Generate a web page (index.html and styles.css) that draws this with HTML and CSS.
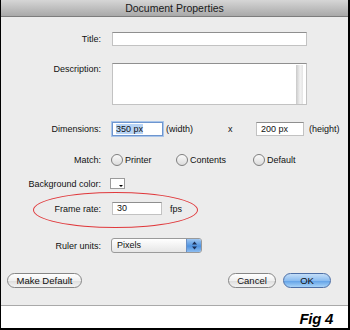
FILE: index.html
```html
<!DOCTYPE html>
<html lang="en">
<head>
    <meta charset="UTF-8">
    <title>Document Properties</title>
    <link rel="stylesheet" href="styles.css">
</head>
<body>
    <div class="figure">
        <div class="titlebar">Document Properties</div>
        <div class="dialog">
            <div class="row r-title">
                <label class="lbl">Title:</label>
                <div class="field wide"></div>
            </div>
            <div class="row r-desc">
                <label class="lbl">Description:</label>
                <div class="field area"><div class="scroll"></div></div>
            </div>
            <div class="row r-dims">
                <label class="lbl">Dimensions:</label>
                <div class="field dim focus"><span class="sel">350 px</span></div>
                <span class="unit">(width)</span>
                <span class="times">x</span>
                <div class="field dim2">200 px</div>
                <span class="unit2">(height)</span>
            </div>
            <div class="row r-match">
                <label class="lbl">Match:</label>
                <div class="opt o1"><span class="radio"></span>Printer</div>
                <div class="opt o2"><span class="radio"></span>Contents</div>
                <div class="opt"><span class="radio"></span>Default</div>
            </div>
            <div class="row r-bg">
                <label class="lbl">Background color:</label>
                <div class="swatch"><span class="tri"></span></div>
            </div>
            <div class="row r-frame">
                <label class="lbl">Frame rate:</label>
                <div class="field fps">30</div>
                <span class="fps-unit">fps</span>
            </div>
            <div class="row r-ruler">
                <label class="lbl">Ruler units:</label>
                <div class="popup">
                    <span class="popup-text">Pixels</span>
                    <span class="stepper">
                        <svg width="7" height="11" viewBox="0 0 7 11"><path d="M3.5 1.5 L6 4.5 H1 Z M3.5 9.5 L6 6.5 H1 Z" fill="#1b2f57"/></svg>
                    </span>
                </div>
            </div>
            <div class="buttons">
                <button class="btn make">Make Default</button>
                <div class="right">
                    <button class="btn cancel">Cancel</button>
                    <button class="btn ok">OK</button>
                </div>
            </div>
            <div class="ring"></div>
        </div>
        <div class="caption">Fig 4</div>
    </div>
</body>
</html>
```

FILE: styles.css
```css
html, body {
    margin: 0;
    padding: 0;
    background-color: #fff;
}
.figure {
    width: 350px;
    height: 330px;
    box-sizing: border-box;
    border-left: 1px solid #000;
    border-right: 2px solid #000;
    border-bottom: 2px solid #000;
    font-family: 'Liberation Sans', Arial, sans-serif;
    color: #111;
    font-size: 9px;
}
.titlebar {
    height: 16px;
    line-height: 16px;
    border-bottom: 1px solid #7d7d7d;
    background: linear-gradient(#d6d6d6, #a9a9a9);
    text-align: center;
    font-size: 10.5px;
    color: #1a1a1a;
}
.dialog {
    position: relative;
    background-color: #ececec;
    padding: 15px 0 17px 0;
    border-bottom: 1px solid #a9a9a9;
}
.row {
    display: flex;
    align-items: center;
}
.lbl {
    width: 100px;
    text-align: right;
    margin-right: 11px;
    flex-shrink: 0;
}
.r-desc { margin-top: 17px; align-items: flex-start; }
.r-desc .lbl { padding-top: 1px; }
.r-dims { margin-top: 17px; }
.r-match { margin-top: 18px; }
.r-bg { margin-top: 12px; }
.r-frame { margin-top: 13px; }
.r-ruler { margin-top: 23px; }

.field {
    box-sizing: border-box;
    height: 14px;
    background-color: #fff;
    border: 1px solid #c2c2c2;
    border-top-color: #8f8f8f;
    padding-left: 4px;
    line-height: 12px;
}
.wide { width: 195px; }
.area {
    width: 195px;
    height: 42px;
    position: relative;
}
.scroll {
    position: absolute;
    right: 3px;
    top: 1px;
    bottom: 0;
    width: 7px;
    background: linear-gradient(to right, #c9c9c9, #f2f2f2 60%, #e4e4e4);
}
.dim { width: 51px; }
.focus {
    border: 1px solid #6d95cf;
    box-shadow: 0 0 0 1px #a9c5ea;
    padding-left: 3px;
}
.sel { background-color: #b7d3f5; }
.unit { width: 62px; margin-left: 3px; }
.times { width: 28px; }
.dim2 { width: 48px; }
.unit2 { margin-left: 5px; }

.opt {
    display: flex;
    align-items: center;
}
.o1 { width: 65px; }
.o2 { width: 77px; }
.radio {
    box-sizing: border-box;
    width: 12px;
    height: 12px;
    border-radius: 50%;
    border: 1px solid #7f7f7f;
    background: linear-gradient(#fafafa, #dcdcdc);
    margin-right: 2px;
    margin-left: -1px;
}

.swatch {
    position: relative;
    box-sizing: border-box;
    width: 15px;
    height: 11px;
    margin-left: -2px;
    background-color: #fff;
    border: 1px solid #9b9b9b;
}
.tri {
    position: absolute;
    right: 1px;
    bottom: 1px;
    border-left: 2px solid transparent;
    border-right: 2px solid transparent;
    border-top: 2px solid #000;
}

.fps { width: 50px; height: 13px; line-height: 11px; }
.fps-unit { margin-left: 8px; }

.popup {
    box-sizing: border-box;
    width: 91px;
    height: 15px;
    margin-left: -1px;
    display: flex;
    border: 1px solid #9a9a9a;
    border-radius: 3px;
    background: linear-gradient(#ffffff, #e6e6e6);
    overflow: hidden;
}
.popup-text {
    flex: 1;
    padding-left: 5px;
    line-height: 13px;
}
.stepper {
    width: 14px;
    display: flex;
    align-items: center;
    justify-content: center;
    background: linear-gradient(#9fc7f1, #4f92e0 55%, #8dbdf0);
    border-left: 1px solid #6a8fc4;
}

.buttons {
    display: flex;
    justify-content: space-between;
    margin-top: 20px;
    padding: 0 17px 0 6px;
}
.right {
    display: flex;
    gap: 7px;
}
.btn {
    box-sizing: border-box;
    height: 15px;
    padding: 0;
    border: 1px solid #868686;
    border-radius: 8px;
    background: linear-gradient(#ffffff, #f0f0f0 50%, #dcdcdc 51%, #f4f4f4);
    font-family: 'Liberation Sans', Arial, sans-serif;
    font-size: 9.5px;
    color: #111;
    line-height: 13px;
}
.make { width: 75px; }
.cancel { width: 48px; }
.ok {
    width: 48px;
    border-color: #4d6fa6;
    background: linear-gradient(#c4def8, #8cbdf0 50%, #5e9fe6 51%, #a8d3f8);
}

.ring {
    position: absolute;
    left: 32px;
    top: 175px;
    width: 165px;
    height: 36px;
    box-sizing: border-box;
    border: 1px solid #e0393c;
    border-radius: 50%;
}

.caption {
    height: 22px;
    text-align: right;
    padding-right: 15px;
    font-size: 15px;
    font-weight: bold;
    font-style: italic;
    line-height: 25px;
    color: #000;
    letter-spacing: -0.3px;
}
```
